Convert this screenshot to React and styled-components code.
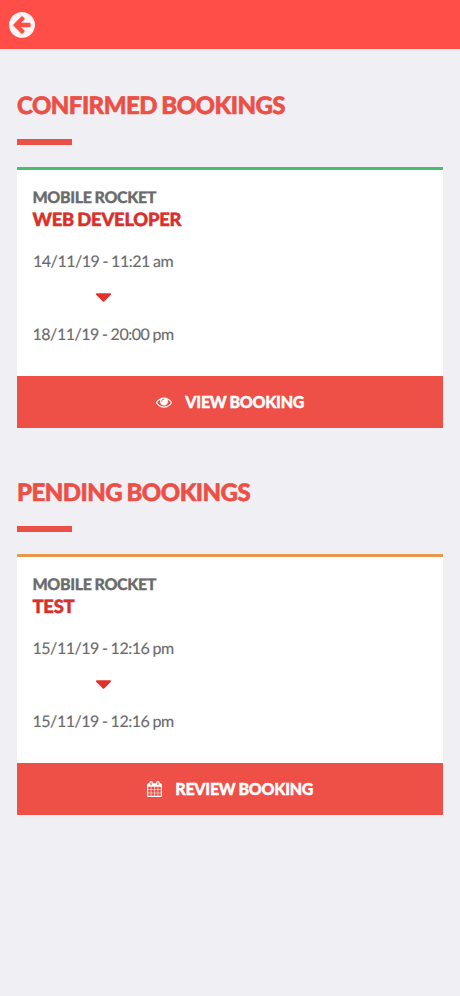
import React from 'react'
import styled, { createGlobalStyle } from 'styled-components'

const bookings = [
    {
        heading: 'Confirmed Bookings',
        company: 'Mobile Rocket',
        role: 'Web Developer',
        start: '14/11/19 - 11:21 am',
        end: '18/11/19 - 20:00 pm',
        action: 'View Booking',
        icon: 'eye',
        iconWidth: 16,
        accent: '#4cba70',
    },
    {
        heading: 'Pending Bookings',
        company: 'Mobile Rocket',
        role: 'Test',
        start: '15/11/19 - 12:16 pm',
        end: '15/11/19 - 12:16 pm',
        action: 'Review Booking',
        icon: 'calendar',
        iconWidth: 15,
        accent: '#e8984a',
    },
]

const icons = {
    back: {
        box: '128 128 1536 1536',
        path: 'M1408 960v-128q0-26-19-45t-45-19h-502l189-189q19-19 19-45t-19-45l-91-91q-18-18-45-18t-45 18l-362 362-91 91q-18 18-18 45t18 45l91 91 362 362q18 18 45 18t45-18l91-91q18-18 18-45t-18-45l-189-189h502q26 0 45-19t19-45zm256-64q0 209-103 385.5t-279.5 279.5-385.5 103-385.5-103-279.5-279.5-103-385.5 103-385.5 279.5-279.5 385.5-103 385.5 103 279.5 279.5 103 385.5z',
    },
    caret: {
        box: '384 640 1024 576',
        path: 'M1408 704q0 26-19 45l-448 448q-19 19-45 19t-45-19l-448-448q-19-19-19-45t19-45 45-19h896q26 0 45 19t19 45z',
    },
    eye: {
        box: '0 0 1792 1792',
        path: 'M1664 960q-152-236-381-353 61 104 61 225 0 185-131.5 316.5t-316.5 131.5-316.5-131.5-131.5-316.5q0-121 61-225-229 117-381 353 133 205 333.5 326.5t434.5 121.5 434.5-121.5 333.5-326.5zm-720-384q0-20-14-34t-34-14q-125 0-214.5 89.5t-89.5 214.5q0 20 14 34t34 14 34-14 14-34q0-86 61-147t147-61q20 0 34-14t14-34zm848 384q0 34-20 69-140 230-376.5 368.5t-499.5 138.5-499.5-139-376.5-368q-20-35-20-69t20-69q140-229 376.5-368t499.5-139 499.5 139 376.5 368q20 35 20 69z',
    },
    calendar: {
        box: '64 0 1664 1792',
        path: 'M192 1664h288v-288h-288v288zm352 0h320v-288h-320v288zm-352-352h288v-320h-288v320zm352 0h320v-320h-320v320zm-352-384h288v-288h-288v288zm736 736h320v-288h-320v288zm-384-736h320v-288h-320v288zm768 736h288v-288h-288v288zm-384-352h320v-320h-320v320zm-352-864v-288q0-13-9.5-22.5t-22.5-9.5h-64q-13 0-22.5 9.5t-9.5 22.5v288q0 13 9.5 22.5t22.5 9.5h64q13 0 22.5-9.5t9.5-22.5zm736 864h288v-320h-288v320zm-384-384h320v-288h-320v288zm384 0h288v-288h-288v288zm32-480v-288q0-13-9.5-22.5t-22.5-9.5h-64q-13 0-22.5 9.5t-9.5 22.5v288q0 13 9.5 22.5t22.5 9.5h64q13 0 22.5-9.5t9.5-22.5zm384-64v1280q0 52-38 90t-90 38h-1408q-52 0-90-38t-38-90v-1280q0-52 38-90t90-38h128v-96q0-66 47-113t113-47h64q66 0 113 47t47 113v96h384v-96q0-66 47-113t113-47h64q66 0 113 47t47 113v96h128q52 0 90 38t38 90z',
    },
}

function Icon({ name, width, height }) {
    return (
        <Glyph viewBox={icons[name].box} width={width} height={height} aria-hidden="true">
            <path d={icons[name].path} />
        </Glyph>
    )
}

function Booking({ booking }) {
    return (
        <Section>
            <Heading>{booking.heading}</Heading>
            <Card $accent={booking.accent}>
                <Details>
                    <Company>{booking.company}</Company>
                    <Role>{booking.role}</Role>
                    <Dates>
                        <Time>{booking.start}</Time>
                        <Icon name="caret" width={15} height={9} />
                        <Time>{booking.end}</Time>
                    </Dates>
                </Details>
                <Action type="button">
                    <Icon name={booking.icon} width={booking.iconWidth} height={16} />
                    <Label>{booking.action}</Label>
                </Action>
            </Card>
        </Section>
    )
}

function App() {
    return (
        <>
            <GlobalStyle />
            <TopBar>
                <BackButton type="button" aria-label="Back">
                    <Icon name="back" width={26} height={26} />
                </BackButton>
            </TopBar>
            <main>
                {bookings.map((booking) => (
                    <Booking key={booking.heading} booking={booking} />
                ))}
            </main>
        </>
    )
}

const GlobalStyle = createGlobalStyle`
    * {
        box-sizing: border-box;
    }

    body {
        margin: 0;
        background: #f0eff4;
        color: #6b6b6b;
        font-family: Lato, sans-serif;
        text-rendering: geometricPrecision;
    }
`

const Glyph = styled.svg`
    display: block;
    flex: none;
    fill: currentColor;
`

const TopBar = styled.header`
    display: flex;
    align-items: center;
    height: 49px;
    padding: 0 9px;
    background: #ff4e47;
`

const BackButton = styled.button`
    padding: 0;
    border: 0;
    background: none;
    color: #fff5f4;
`

const Section = styled.section`
    padding: 42px 17px 0;

    & + & {
        padding-top: 50px;
    }
`

const Heading = styled.h2`
    margin: 0 0 22px;
    color: #eb5047;
    font-size: 24px;
    font-weight: 900;
    letter-spacing: -0.54px;
    line-height: 30px;
    text-transform: uppercase;
    word-spacing: -0.8px;
    -webkit-text-stroke: 0.6px currentColor;

    &::after {
        content: '';
        display: block;
        width: 55px;
        height: 6px;
        margin-top: 18px;
        background: #eb5047;
    }
`

const Card = styled.article`
    border-top: 3px solid ${(props) => props.$accent};
    background: #fff;
`

const Details = styled.div`
    height: 206px;
    padding: 17px 15.5px 0;
`

const Company = styled.div`
    font-size: 16px;
    font-weight: 900;
    letter-spacing: -0.35px;
    line-height: 22px;
    text-transform: uppercase;
    word-spacing: -0.5px;
    -webkit-text-stroke: 0.3px currentColor;
`

const Role = styled.div`
    color: #d9302c;
    font-size: 18.4px;
    font-weight: 900;
    letter-spacing: -0.25px;
    line-height: 21px;
    text-transform: uppercase;
    word-spacing: -0.7px;
    -webkit-text-stroke: 0.5px currentColor;
`

const Dates = styled.div`
    display: inline-flex;
    flex-direction: column;
    align-items: center;
    gap: 21px;
    margin-top: 21px;
    color: #e0312d;

    svg {
        margin: -1px 0 1px;
    }
`

const Time = styled.div`
    color: #6b6b6b;
    font-size: 16px;
    letter-spacing: -0.47px;
    line-height: 22px;
    word-spacing: -0.5px;
    -webkit-text-stroke: 0.15px currentColor;
`

const Action = styled.button`
    display: flex;
    align-items: center;
    justify-content: center;
    gap: 13.5px;
    width: 100%;
    height: 52px;
    padding: 0;
    border: 0;
    background: #ee4f46;
    color: #fff;
    font-family: inherit;
`

const Label = styled.span`
    padding-bottom: 1px;
    font-size: 16px;
    font-weight: 900;
    letter-spacing: -0.26px;
    line-height: 19px;
    text-transform: uppercase;
    word-spacing: -0.5px;
    -webkit-text-stroke: 0.4px currentColor;
`

export default App
